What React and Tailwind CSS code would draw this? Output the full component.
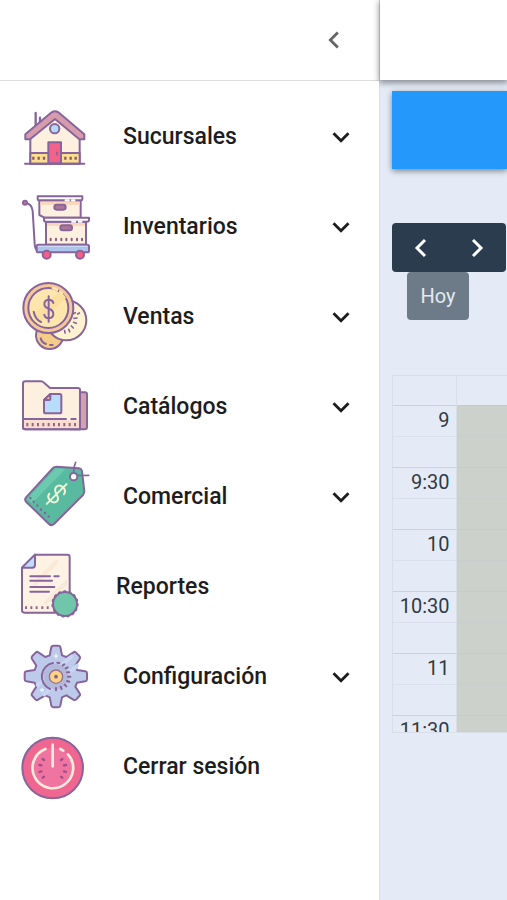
import React from "react";
import { MdChevronLeft, MdExpandMore } from "react-icons/md";

const ink = "#87659c";
const cream = "#fdf0de";

function Icon({ top = 6, children }) {
  return (
    <svg
      className="h-[90px] w-[100px] shrink-0"
      viewBox={`0 ${top} 300 270`}
      fill="none"
      stroke={ink}
      strokeWidth="6"
      strokeLinecap="round"
      strokeLinejoin="round"
      aria-hidden="true"
    >
      {children}
    </svg>
  );
}

function HouseIcon() {
  return (
    <Icon top={-9}>
      <path d="M77 54V104M90 68V96" strokeWidth="7" />
      <path d="M61 124L135 66L209 124V206H61Z" fill={cream} />
      <path d="M61 174H209V206H61Z" fill="#fbdf8c" />
      <path d="M70 185V194M86 185V194M102 185V194M166 185V194M182 185V194M197 185V194" stroke="#8b5a78" strokeWidth="7" strokeLinecap="butt" />
      <path d="M46 118L125 52Q135 45 145 52L223 118V133H208L135 72L60 133H46Z" fill="#d79cac" />
      <path d="M115 205V142H153V205Z" fill="#f2628b" />
      <path d="M141 172V179" strokeWidth="5" />
      <circle cx="134" cy="101" r="14" fill="#b5d8fb" />
      <path d="M45 206H223" />
    </Icon>
  );
}

function CartIcon() {
  return (
    <Icon top={-9}>
      <path d="M47 53Q66 57 68 78L74 177Q75 195 86 201" />
      <circle cx="45" cy="53" r="6" fill="#d87991" />
      <path d="M88 46H212V98H103L88 90Z" fill={cream} />
      <path d="M91 51H209V59H91Z" fill="#f9d5b9" stroke="none" />
      <path d="M83 34H217V42Q217 46 212 46H88Q83 46 83 42Z" fill="#fff" />
      <path d="M167 46H176M186 46H193" stroke="#fff" strokeWidth="7" />
      <rect x="133" y="59" width="34" height="15" rx="7" fill="#ae7894" />
      <path d="M108 110H228V179H108Z" fill={cream} />
      <path d="M111 114H225V122H111Z" fill="#f9d5b9" stroke="none" />
      <path d="M102 98H237V105Q237 110 231 110H108Q102 110 102 105Z" fill="#fff" />
      <path d="M187 110H195M207 110H214" stroke="#fff" strokeWidth="7" />
      <rect x="151" y="121" width="35" height="15" rx="7" fill="#ae7894" />
      <path d="M122 161V166M138 161V166M154 161V166M169 161V166M185 161V166M201 161V166M216 161V166" stroke="#8b5a78" />
      <rect x="80" y="179" width="157" height="23" rx="5" fill="#adc5ed" />
      <path d="M85 184H232" stroke="#c9daf7" strokeWidth="4" />
      <circle cx="110" cy="209" r="12" fill="#f35f87" />
      <circle cx="210" cy="209" r="12" fill="#f35f87" />
    </Icon>
  );
}

function CoinsIcon() {
  return (
    <Icon>
      <circle cx="119" cy="196" r="41" fill="#f5cd88" />
      <path d="M92 205Q96 218 108 222M120 225H128" />
      <circle cx="169" cy="151" r="60" fill="#fff2d1" />
      <path d="M188 132L196 128M192 145L201 144M191 157L199 160M184 168L190 174M176 178L179 185M164 182L165 189M203 132L208 129" strokeWidth="5" />
      <circle cx="115" cy="114" r="75" fill="#f6c798" />
      <circle cx="115" cy="114" r="60" fill="#fce6ad" />
      <path d="M70 133L150 65Q163 73 168 84L88 158Q75 150 70 133Z" fill="#fbdfa1" stroke="none" />
      <path d="M129 54L141 59M151 65L156 69" stroke="#fce6ad" strokeWidth="8" />
      <path d="M71 125Q76 148 93 156" />
      <path d="M116 79V155M130 99Q128 89 116 89Q103 90 103 102Q103 112 117 116Q130 120 130 132Q130 144 116 145Q104 144 103 134" />
    </Icon>
  );
}

function FolderIcon() {
  return (
    <Icon top={-9}>
      <path d="M180 82H225Q231 82 231 89V186Q231 193 224 193H180Z" fill="#d4a0ae" />
      <path d="M39 56Q39 49 46 49H92Q98 49 102 53L120 69H203Q210 69 210 76V193H46Q39 193 39 186Z" fill="#fdf0df" />
      <path d="M42 166H207V190H46L42 186Z" fill="#f9ddd1" stroke="none" />
      <path d="M40 162H168M184 162H197" />
      <path d="M210 76V193H46Q39 193 39 186V162" />
      <path d="M52 174V184M68 174V184M84 174V184M100 174V184M116 174V184M132 174V184M147 174V184M163 174V184M179 174V184M195 174V184" stroke="#9a6681" strokeLinecap="butt" />
      <path d="M121 87H149Q154 87 154 92V140Q154 145 149 145H107Q102 145 102 140V105Z" fill="#b9dcfb" />
      <path d="M121 87V101Q121 105 116 105H102Z" fill="#f1bba1" />
    </Icon>
  );
}

function TagIcon() {
  return (
    <Icon>
      <path d="M129 54Q133 50 140 50L207 55Q214 56 216 63L223 124Q223 130 219 135L132 222Q124 229 117 222L48 155Q43 149 48 142Z" fill="#58bb9f" />
      <path d="M137 55L166 58L67 159L51 147Z" fill="#6bcaae" stroke="none" />
      <path d="M61 144L61 145M71 155L71 156M82 166L82 167M93 178L93 179M105 189L105 190M116 199L116 200" strokeWidth="7" />
      <circle cx="191" cy="80" r="11" fill="#fff" />
      <path d="M191 65Q191 50 197 37M204 76Q219 77 236 76" strokeWidth="5" />
      <g transform="translate(140 132) rotate(45)" stroke="#eff5d8" strokeWidth="6">
        <path d="M0 -42V42M16 -15Q14 -27 0 -28Q-16 -27 -16 -14Q-15 -3 1 1Q16 5 16 15Q15 27 0 28Q-15 27 -16 15" />
      </g>
    </Icon>
  );
}

function ReportIcon() {
  return (
    <Icon>
      <path d="M75 44H172Q179 44 179 51V218H43Q36 218 36 211V83Z" fill="#fdf2e4" />
      <path d="M74 132L139 66M108 188L170 126" stroke="#fae9d6" strokeWidth="12" />
      <path d="M75 44V75Q75 83 67 83H36Z" fill="#c0dbfc" />
      <path d="M61 109H120M133 109H146M61 122H126M61 141H133M61 155H117" />
      <path d="M48 199V207M64 199V207M80 199V207M97 199V207M113 199V207" stroke="#9a6681" strokeLinecap="butt" />
      <circle cx="165" cy="192" r="36" fill="#70c6aa" />
      <circle cx="165" cy="192" r="38" strokeWidth="6" strokeDasharray="4 11.92" />
    </Icon>
  );
}

function GearIcon() {
  return (
    <Icon>
      <path d="M119 76L124 51Q125 47 130 47H145Q150 47 151 51L156 76L169 81L190 67Q194 64 198 68L208 78Q212 82 209 87L196 107L201 120L226 124Q231 125 231 130V148Q231 153 226 154L201 158L196 170L209 190Q212 194 208 198L199 208Q195 212 190 209L169 196L156 202L151 227Q150 232 145 232H130Q125 232 124 227L119 202L106 196L84 209Q80 212 76 208L67 198Q63 194 66 190L79 170L74 158L49 154Q44 153 44 148V130Q44 125 49 124L74 120L79 107L66 87Q63 82 67 78L77 68Q81 64 85 67L106 81Z" fill="#bdcae9" />
      <path d="M83 165L184 80M103 193L201 107" stroke="#c9d6f3" strokeWidth="12" />
      <circle cx="138" cy="140" r="38" fill="#b3b9db" stroke="none" />
      <path d="M120 177A41 41 0 0 1 129 99M142 98L148 99M158 106L163 103M167 115L173 112M171 127H178M174 140H181M171 153L178 155M164 164L169 169M152 170L155 177M138 174V181" />
      <circle cx="138" cy="140" r="20" fill="#fbd287" stroke="#98728f" strokeWidth="4" />
      <circle cx="138" cy="140" r="3" stroke="#826083" strokeWidth="5" />
      <path d="M133 78H143M138 72V84M91 180H101M96 175V185" stroke="#e8f4ff" strokeWidth="4" />
    </Icon>
  );
}

function PowerIcon() {
  return (
    <Icon top={-9}>
      <circle cx="128" cy="129" r="91" fill="#ef6790" />
      <circle cx="128" cy="129" r="61" fill="#f074a0" stroke="none" />
      <path d="M128 59V124" stroke="#ffebdb" strokeWidth="8" />
      <path d="M106 72A61 61 0 1 0 174 88M151 72L160 77" stroke="#ffebdb" strokeWidth="8" />
      <path d="M98 102L102 105M88 120L94 121M88 141L94 139M98 158L102 155M157 102L153 105M168 120L162 121M168 141L162 139M157 158L153 155" stroke="#a14e87" strokeWidth="7" />
    </Icon>
  );
}

const items = [
  { label: "Sucursales", icon: HouseIcon, expandable: true },
  { label: "Inventarios", icon: CartIcon, expandable: true },
  { label: "Ventas", icon: CoinsIcon, expandable: true },
  { label: "Catálogos", icon: FolderIcon, expandable: true },
  { label: "Comercial", icon: TagIcon, expandable: true },
  { label: "Reportes", icon: ReportIcon, compact: true },
  { label: "Configuración", icon: GearIcon, expandable: true },
  { label: "Cerrar sesión", icon: PowerIcon },
];

const slots = ["9", "", "9:30", "", "10", "", "10:30", "", "11", "", "11:30"];

function Sidebar() {
  return (
    <aside className="flex w-[380px] shrink-0 flex-col border-r border-[#d9dde3] bg-white">
      <div className="flex h-[81px] items-center justify-end border-b border-[#dedede] pr-7">
        <button type="button" aria-label="Cerrar menú" className="text-[#666666]">
          <MdChevronLeft size={34} />
        </button>
      </div>
      <nav className="relative z-20 flex-1 bg-white pt-[11px]">
        <ul>
          {items.map(({ label, icon: ItemIcon, expandable, compact }) => (
            <li key={label}>
              <button
                type="button"
                aria-expanded={expandable ? false : undefined}
                className={`flex h-[90px] w-full items-center pr-[21px] pl-[10px] text-left ${compact ? "gap-[6px]" : "gap-[13px]"}`}
              >
                <ItemIcon />
                <span className="flex-1 text-[23px] leading-8 font-medium text-[#1d1d1d]">{label}</span>
                {expandable && <MdExpandMore size={34} className="text-[#1d1d1d]" />}
              </button>
            </li>
          ))}
        </ul>
      </nav>
    </aside>
  );
}

function Arrow({ d }) {
  return (
    <svg className="h-6 w-6" viewBox="0 0 24 24" fill="none" stroke="currentColor" strokeWidth="3" aria-hidden="true">
      <path d={d} />
    </svg>
  );
}

function Calendar() {
  return (
    <section className="pl-3">
      <div className="flex h-[49px] w-[114px] overflow-hidden rounded-[4px] bg-[#2c3c4f] text-white">
        <button type="button" aria-label="Anterior" className="flex flex-1 items-center justify-center">
          <Arrow d="M16 4L8 12L16 20" />
        </button>
        <button type="button" aria-label="Siguiente" className="flex flex-1 items-center justify-center">
          <Arrow d="M7 4L15 12L7 20" />
        </button>
      </div>
      <button type="button" className="ml-[15px] block h-12 w-[62px] rounded-[4px] bg-[#6d7b89] text-[20px] text-[#e3e9f2]">
        Hoy
      </button>
      <div className="mt-[55px] h-[358px] overflow-hidden border-y border-l border-[#d8dfe7]">
        <table className="w-full table-fixed border-collapse text-[20px] text-[#333a44]">
          <thead>
            <tr className="h-[29px]">
              <th className="w-[63px] border-r border-[#d8dfe7]" />
              <th />
            </tr>
          </thead>
          <tbody>
            {slots.map((time, i) => (
              <tr key={i} className={`h-[31px] border-t ${i % 2 ? "border-[#bfc8cf]/30" : "border-[#bfc8cf]/70"}`}>
                <td className="border-r border-[#d8dfe7] p-0 pr-[6px] text-right align-top leading-7">{time}</td>
                <td className="bg-[#ccd2cb]" />
              </tr>
            ))}
          </tbody>
        </table>
      </div>
    </section>
  );
}

export default function App() {
  return (
    <div className="flex min-h-screen overflow-hidden bg-white font-[Roboto,sans-serif]">
      <Sidebar />
      <main className="min-w-0 flex-1 bg-[#e4ebf6]">
        <header className="relative z-10 h-20 bg-white shadow-[0_2px_6px_1px_rgba(0,0,0,0.4)]" />
        <div className="mt-[11px] mb-[54px] ml-3 h-[78px] bg-[#2499fb] shadow-[0_2px_6px_rgba(0,0,0,0.45)]" />
        <Calendar />
      </main>
    </div>
  );
}
